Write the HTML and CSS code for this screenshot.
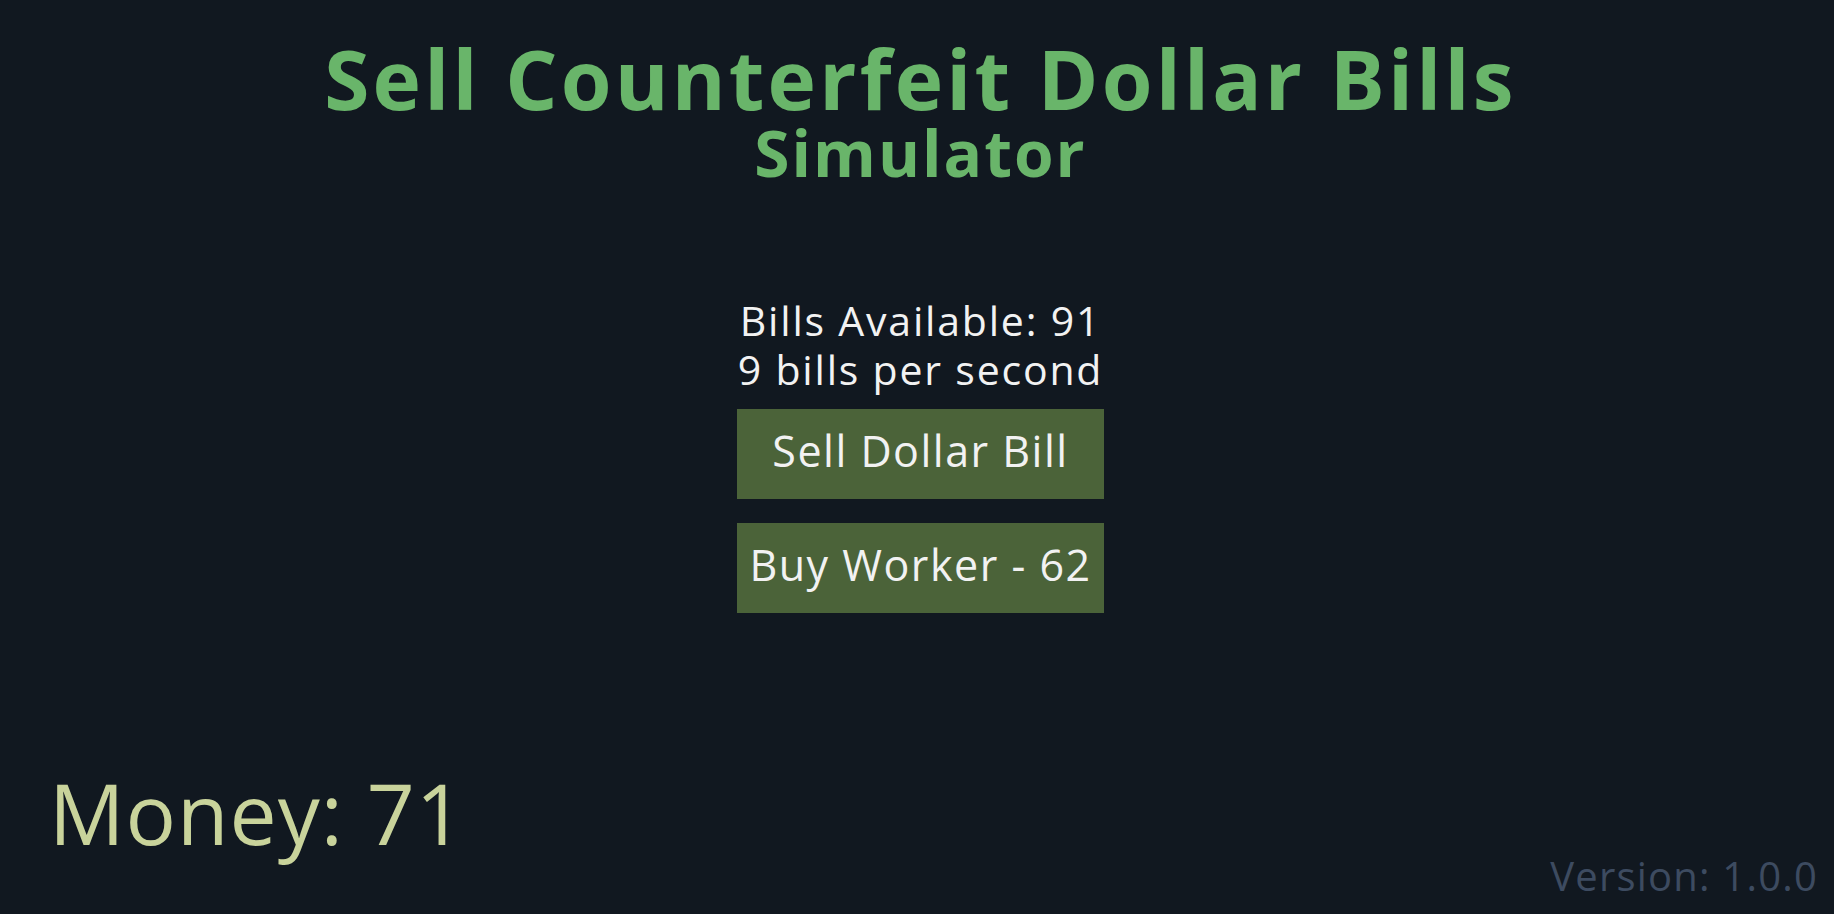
FILE: index.html
```html
<!DOCTYPE html>
<html lang="en">
<head>
<meta charset="utf-8">
<title>Sell Counterfeit Dollar Bills Simulator</title>
<link rel="stylesheet" href="styles.css">
</head>
<body>
<div class="app">
  <header class="header">
    <h1 class="title-main">Sell Counterfeit Dollar Bills</h1>
    <h2 class="title-sub">Simulator</h2>
  </header>
  <main class="game">
    <div class="stats">
      <div class="stat">Bills Available: 91</div>
      <div class="stat">9 bills per second</div>
    </div>
    <div class="actions">
      <button class="btn">Sell Dollar Bill</button>
      <button class="btn">Buy Worker - 62</button>
    </div>
  </main>
  <footer class="footer">
    <div class="money">Money: 71</div>
    <div class="version">Version: 1.0.0</div>
  </footer>
</div>
</body>
</html>
```
FILE: styles.css
```css
html, body {
  margin: 0;
  padding: 0;
  height: 100%;
}
body {
  background: #111820;
  font-family: "Open Sans", "Lato", sans-serif;
  color: #f2f2f2;
}
.app {
  height: 100%;
  display: flex;
  flex-direction: column;
  box-sizing: border-box;
}
.header {
  text-align: center;
  padding-top: 32px;
  padding-left: 7px;
}
.title-main {
  margin: 0;
  font-size: 82px;
  line-height: 92px;
  font-weight: 700;
  color: #69b56a;
  letter-spacing: 3.2px;
}
.title-sub {
  margin: 0;
  font-size: 64px;
  line-height: 57px;
  font-weight: 700;
  color: #69b56a;
  letter-spacing: 2px;
}
.game {
  flex: 1;
  display: flex;
  flex-direction: column;
  align-items: center;
  padding-top: 115px;
  padding-left: 7px;
}
.stats {
  text-align: center;
  font-size: 41px;
  line-height: 49px;
  letter-spacing: 1.8px;
}
.actions {
  display: flex;
  flex-direction: column;
  gap: 24px;
  margin-top: 15px;
}
.btn {
  width: 367px;
  height: 90px;
  border: none;
  border-radius: 0;
  background: #4b6339;
  color: #f2f2f2;
  font-family: inherit;
  font-size: 43px;
  letter-spacing: 1.5px;
  padding: 0 0 7px;
}
.footer {
  display: flex;
  justify-content: space-between;
  align-items: flex-end;
  padding: 0 16px 18px 49px;
}
.money {
  font-size: 84px;
  line-height: 1;
  color: #c9d39b;
  letter-spacing: 1px;
  padding-bottom: 41px;
}
.version {
  font-size: 40px;
  line-height: 1;
  color: #3d4b60;
  letter-spacing: 1.2px;
}
```
